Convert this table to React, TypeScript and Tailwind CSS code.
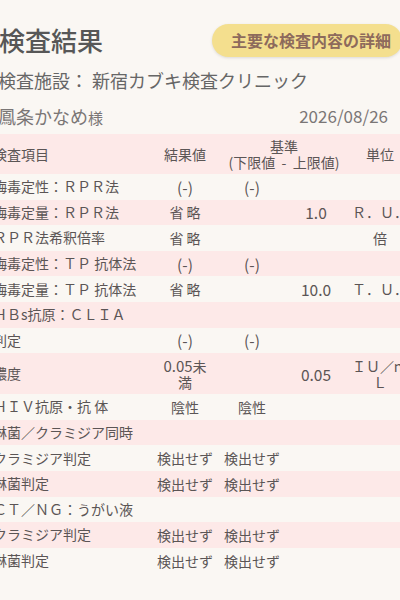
import React from "react";

type Row = {
  name: string;
  result?: React.ReactNode;
  low?: string;
  high?: string;
  unit?: React.ReactNode;
  tall?: boolean;
};

const rows: Row[] = [
  { name: "梅毒定性：ＲＰＲ法", result: "(-)", low: "(-)" },
  { name: "梅毒定量：ＲＰＲ法", result: "省 略", high: "1.0", unit: "Ｒ．Ｕ．" },
  { name: "ＲＰＲ法希釈倍率", result: "省 略", unit: "倍" },
  { name: "梅毒定性：ＴＰ 抗体法", result: "(-)", low: "(-)" },
  { name: "梅毒定量：ＴＰ 抗体法", result: "省 略", high: "10.0", unit: "Ｔ．Ｕ．" },
  { name: "ＨＢs抗原：ＣＬＩＡ" },
  { name: "判定", result: "(-)", low: "(-)" },
  {
    name: "濃度",
    result: (
      <>
        <span className="text-[15px]">0.05</span>未<br />満
      </>
    ),
    high: "0.05",
    unit: (
      <>
        ＩＵ／ｍ<br />Ｌ
      </>
    ),
    tall: true,
  },
  { name: "ＨＩＶ抗原・抗 体", result: "陰性", low: "陰性" },
  { name: "淋菌／クラミジア同時" },
  { name: "クラミジア判定", result: "検出せず", low: "検出せず" },
  { name: "淋菌判定", result: "検出せず", low: "検出せず" },
  { name: "ＣＴ／ＮＧ：うがい液" },
  { name: "クラミジア判定", result: "検出せず", low: "検出せず" },
  { name: "淋菌判定", result: "検出せず", low: "検出せず" },
];

const isAscii = (v: React.ReactNode) =>
  typeof v === "string" && /^[\x20-\x7e]+$/.test(v);

function Cell({ v, w }: { v?: React.ReactNode; w: string }) {
  return (
    <div
      className={
        w +
        " shrink-0 text-center leading-[16px] whitespace-nowrap " +
        (isAscii(v) ? "text-[15.5px]" : "")
      }
    >
      {v}
    </div>
  );
}

export default function App() {
  return (
    <div className="w-[400px] h-[600px] overflow-hidden bg-[#faf7f3] font-['Noto_Sans_CJK_JP','Noto_Sans',sans-serif] text-[#5b5555]">
      {/* Title row */}
      <div className="mt-[18px] h-[44px] flex items-center justify-between">
        <div className="ml-[-1px] text-[26px] leading-none font-medium text-[#575757]">
          検査結果
        </div>
        <div className="mr-[-2px] h-[33px] w-[190px] rounded-full bg-[#f4df8e] shadow-[0_1px_3px_rgba(0,0,0,0.12)] flex items-center pl-[19px]">
          <span className="text-[16px] font-bold text-[#8d6a5c] leading-none whitespace-nowrap">
            主要な検査内容の詳細
          </span>
        </div>
      </div>
      {/* Facility */}
      <div className="h-[36px] flex items-center ml-[-2px] text-[18px] text-[#666] whitespace-nowrap">
        検査施設：&nbsp;新宿カブキ検査クリニック
      </div>
      {/* Name & date */}
      <div className="h-[36px] flex items-center justify-between ml-[-2px] pr-[12px] text-[#7a7676]">
        <div className="whitespace-nowrap">
          <span className="text-[18px]">鳳条かなめ</span>
          <span className="text-[15px]">様</span>
        </div>
        <div className="text-[17px]">2026/08/26</div>
      </div>
      {/* Table */}
      <div className="ml-[-7px] w-[419px] text-[14px]">
        <div className="h-[40px] flex items-center bg-[#fde9e8]">
          <div className="w-[157px] shrink-0">検査項目</div>
          <div className="w-[70px] shrink-0 text-center">結果値</div>
          <div className="w-[128px] shrink-0 text-center leading-[16px] whitespace-nowrap">
            基準
            <br />
            (下限値&nbsp;&nbsp;-&nbsp;&nbsp;上限値)
          </div>
          <div className="w-[64px] shrink-0 text-center">単位</div>
        </div>
        {rows.map((r, i) => (
          <div
            key={i}
            className={
              "flex items-center " +
              (r.tall ? "h-[41px] " : "h-[25.6px] ") +
              (i % 2 === 0 ? "bg-[#faf7f3]" : "bg-[#fde9e8]")
            }
          >
            <div className="w-[157px] shrink-0 whitespace-nowrap">{r.name}</div>
            <Cell v={r.result} w="w-[70px]" />
            <Cell v={r.low} w="w-[64px]" />
            <Cell v={r.high} w="w-[64px]" />
            <Cell v={r.unit} w="w-[64px]" />
          </div>
        ))}
      </div>
    </div>
  );
}
